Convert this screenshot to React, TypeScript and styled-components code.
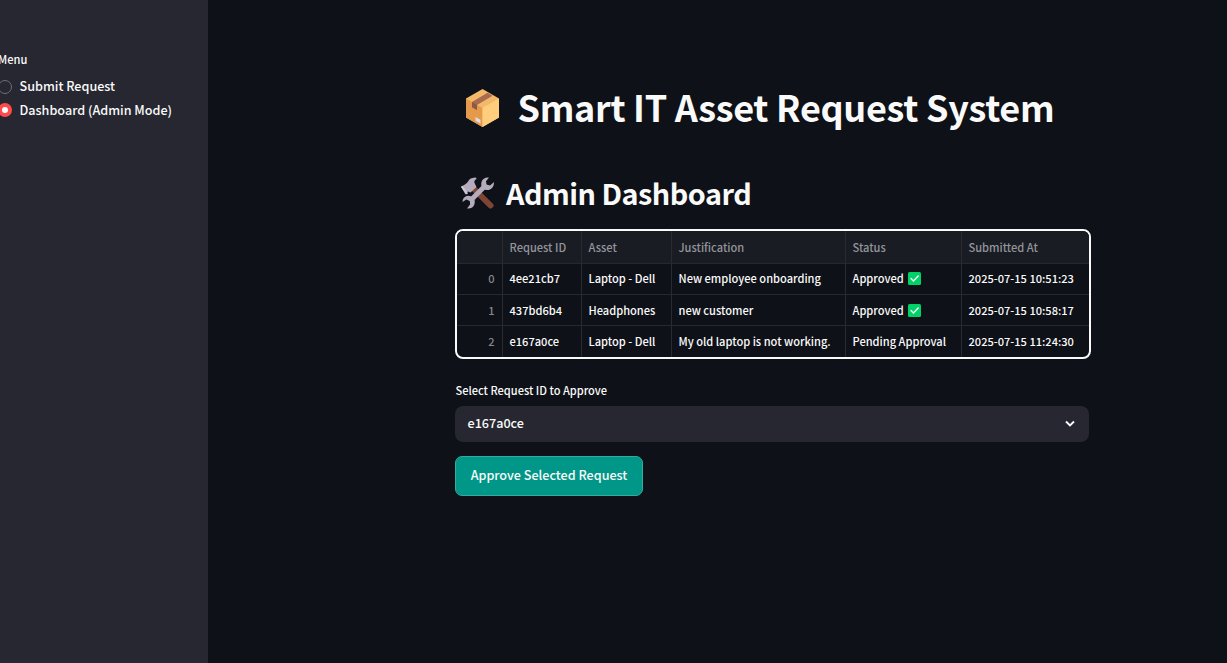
import React from "react";
import styled, { createGlobalStyle } from "styled-components";

const GlobalStyle = createGlobalStyle`
  *, *::before, *::after { box-sizing: border-box; }
  html, body { margin: 0; height: 100%; }
  body {
    background: #0e1117;
    color: #fafafa;
    font-family: "Source Sans Pro", "Noto Sans CJK SC", sans-serif;
    font-weight: 500;
    overflow: hidden;
  }
`;

const Page = styled.div`
  display: flex;
  width: 100%;
  height: 100vh;
`;

const Sidebar = styled.aside`
  width: 208px;
  flex: none;
  background: #262730;
  padding-top: 49px;
  overflow: hidden;
`;

const MenuLabel = styled.div`
  margin-left: -2px;
  margin-bottom: 5px;
  font-size: 11.1px;
  line-height: 20px;
`;

const Option = styled.label`
  display: flex;
  align-items: center;
  gap: 7.5px;
  height: 24px;
  margin-left: -2px;
  font-size: 12.6px;
  line-height: 24px;
  white-space: nowrap;
`;

const Radio = styled.span<{ $on?: boolean }>`
  flex: none;
  width: 14px;
  height: 14px;
  margin-top: ${(p) => (p.$on ? "0" : "1px")};
  border-radius: 50%;
  border: ${(p) => (p.$on ? "4px solid #ff4b4b" : "1px solid #6d6e76")};
  background: ${(p) => (p.$on ? "#ffffff" : "#262730")};
`;

const Main = styled.main`
  flex: 1;
  padding: 82px 0 0 247px;
`;

const Title = styled.h1`
  display: flex;
  align-items: center;
  height: 52px;
  margin: 0;
  padding-left: 7px;
  gap: 13.5px;
  font-size: 36px;
  font-weight: 700;
  letter-spacing: -0.31px;
  line-height: 52px;
  white-space: nowrap;

  span { margin-bottom: 4px; }
`;

const Subtitle = styled.h2`
  display: flex;
  align-items: center;
  height: 44px;
  margin: 37px 0 14px;
  padding-left: 5px;
  gap: 10px;
  font-size: 28.8px;
  font-weight: 600;
  letter-spacing: -0.5px;
  line-height: 44px;
  white-space: nowrap;
`;

const Table = styled.div`
  width: 636px;
  height: 130px;
  border: 2px solid #fafafa;
  border-radius: 8px;
  overflow: hidden;
  display: grid;
  grid-template-rows: 33px 31px 31px 31px;
  font-size: 11.08px;
`;

const Row = styled.div<{ $head?: boolean }>`
  display: grid;
  grid-template-columns: 46px 79px 90px 174px 116px 1fr;
  background: ${(p) => (p.$head ? "#1a1c24" : "transparent")};
  color: ${(p) => (p.$head ? "#93959b" : "#fafafa")};
  border-bottom: 1px solid #26282e;
  &:last-child { border-bottom: 0; }
`;

const Cell = styled.div<{ $index?: boolean; $raised?: boolean }>`
  display: flex;
  align-items: center;
  justify-content: ${(p) => (p.$index ? "flex-end" : "flex-start")};
  gap: 4.5px;
  padding: ${(p) => (p.$index ? "0 7.5px 0 0" : "0 0 0 6.5px")};
  padding-bottom: ${(p) => (p.$raised ? "1.5px" : "0")};
  color: ${(p) => (p.$index ? "#84868c" : "inherit")};
  border-right: 1px solid #292b31;
  line-height: 16px;
  white-space: nowrap;
  &:last-child { border-right: 0; }
`;

const FieldLabel = styled.div`
  margin-top: 21px;
  height: 20px;
  padding-left: 0.5px;
  font-size: 11.05px;
  line-height: 20px;
`;

const Select = styled.div`
  display: flex;
  align-items: center;
  justify-content: space-between;
  width: 634px;
  height: 36px;
  margin-top: 6px;
  padding: 0 13px 0 12.5px;
  border-radius: 8px;
  background: #262730;
  font-size: 12.6px;
  line-height: 18px;
`;

const SelectValue = styled.span`
  padding-bottom: 2px;
`;

const Button = styled.button`
  display: flex;
  align-items: center;
  justify-content: center;
  width: 188px;
  height: 40px;
  margin-top: 14px;
  padding: 0 0 2px;
  border: 1px solid #33ab9f;
  border-radius: 7px;
  background: #009688;
  color: #fafafa;
  font: inherit;
  font-size: 12.6px;
  line-height: 18px;
`;

const BoxIcon = () => (
  <svg width="42" height="40" viewBox="0 0 42 40">
    <path d="M20.500 1 37 10.500v19L20.500 39 4 29.500v-19z" fill="#f3b869" />
    <path d="M4 10.500 20.500 20v19L4 29.500z" fill="#e59a4b" />
    <path d="M20.500 20 37 10.500v19L20.500 39z" fill="#ffce7c" />
    <path d="M10 14 25.500 4.800l5 2.900L15 17v5l-5-2.800z" fill="#a86a50" />
    <path d="M10 14 15 17v5l-5-2.800z" fill="#8f5745" />
    <path d="m13.500 29 5 2.800v3.800l-5-2.800z" fill="#dfdce3" />
  </svg>
);

const ToolsIcon = () => (
  <svg width="36" height="34" viewBox="0 0 36 34">
    <path d="m14 13 16.500 16.500" stroke="#7d4533" strokeWidth="6" strokeLinecap="round" />
    <path d="M1 10.500Q7 8 9 4q1.500-2.500 7-2.500l.5 1.500q-3.500 2-1.500 5l1.500 3-6 5.500-2.500-1-2.500 3z" fill="#b4acbc" />
    <path d="m1 11 1.500-1.300 5.500 7.500-1.500 1.300z" fill="#cdc4d6" />
    <path d="m10 25 16-16" stroke="#b4acbc" strokeWidth="5" />
    <path d="M29 1.500q-6-.5-7.500 4.500-1 4 1.500 6.500 3 2.500 7 1 4-2 4-7.500l-4 3.500-3.500-1-.5-3.200z" fill="#b4acbc" />
    <path d="M7 32.500q6 .5 7.500-4.500 1-4-1.500-6.500-3-2.500-6.500-1.500-4 1.500-4 6l3.800-2.500 3.500 1.500.3 3.500z" fill="#b4acbc" />
  </svg>
);

const Check = () => (
  <svg width="13" height="13" viewBox="0 0 13 13">
    <rect width="13" height="13" rx="1.5" fill="#00d26a" />
    <path d="m3 6.600 2.500 2.500 4.700-5" fill="none" stroke="#f4fff8" strokeWidth="1.400" strokeLinecap="round" />
  </svg>
);

const Chevron = () => (
  <svg width="12" height="12" viewBox="0 0 12 12">
    <path d="m2 3.500 4 4 4-4" fill="none" stroke="#fafafa" strokeWidth="1.900" />
  </svg>
);

const headers = ["", "Request ID", "Asset", "Justification", "Status", "Submitted At"];
const requests = [
  { id: "4ee21cb7", asset: "Laptop - Dell", why: "New employee onboarding", status: "Approved", at: "2025-07-15 10:51:23" },
  { id: "437bd6b4", asset: "Headphones", why: "new customer", status: "Approved", at: "2025-07-15 10:58:17" },
  { id: "e167a0ce", asset: "Laptop - Dell", why: "My old laptop is not working.", status: "Pending Approval", at: "2025-07-15 11:24:30" },
];

export default function App() {
  return (
    <Page>
      <GlobalStyle />
      <Sidebar>
        <MenuLabel>Menu</MenuLabel>
        <Option><Radio />Submit Request</Option>
        <Option><Radio $on />Dashboard (Admin Mode)</Option>
      </Sidebar>
      <Main>
        <Title><BoxIcon /><span>Smart IT Asset Request System</span></Title>
        <Subtitle><ToolsIcon /><span>Admin Dashboard</span></Subtitle>
        <Table>
          <Row $head>
            {headers.map((h) => <Cell key={h}>{h}</Cell>)}
          </Row>
          {requests.map((r, i) => {
            const raised = i !== 1;
            return (
              <Row key={r.id}>
                <Cell $index $raised={raised}>{i}</Cell>
                <Cell $raised={raised}>{r.id}</Cell>
                <Cell $raised={raised}>{r.asset}</Cell>
                <Cell $raised={raised}>{r.why}</Cell>
                <Cell $raised={raised}>{r.status}{r.status === "Approved" && <Check />}</Cell>
                <Cell $raised={raised}>{r.at}</Cell>
              </Row>
            );
          })}
        </Table>
        <FieldLabel>Select Request ID to Approve</FieldLabel>
        <Select><SelectValue>e167a0ce</SelectValue><Chevron /></Select>
        <Button>Approve Selected Request</Button>
      </Main>
    </Page>
  );
}
